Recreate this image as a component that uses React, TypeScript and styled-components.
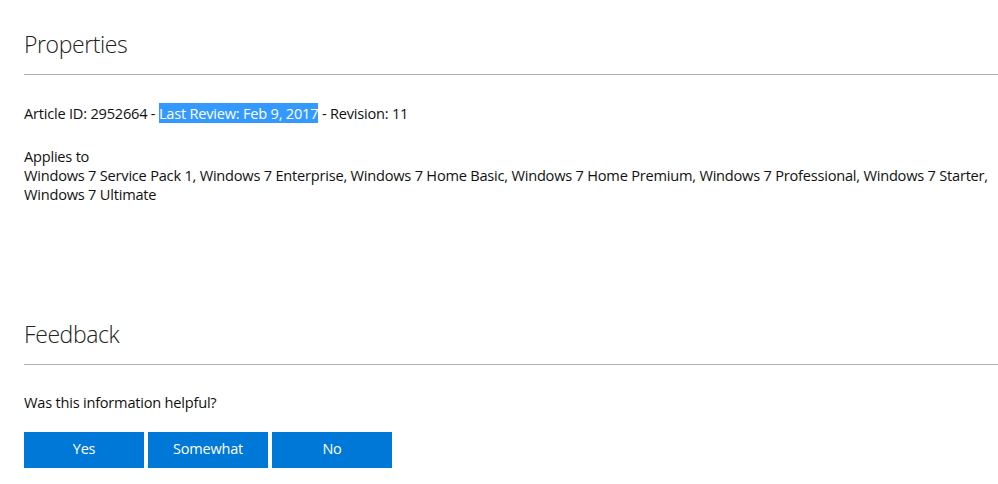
import React from "react";
import styled, { createGlobalStyle } from "styled-components";

const Global = createGlobalStyle`
  html, body { margin: 0; padding: 0; background: #fff; }
  body { font-family: "Segoe UI", "Open Sans", "Liberation Sans", sans-serif; color: #000; }
  ::selection { background: #3399ff; color: #fff; }
`;

const Page = styled.div`
  padding: 22px 0 0 24px;
  width: 974px;
`;

const Section = styled.section<{ $gap?: number }>`
  margin-bottom: ${(p) => p.$gap ?? 0}px;
`;

const Heading = styled.h2`
  margin: 0;
  font-size: 23px;
  font-weight: 300;
  line-height: 32px;
  letter-spacing: -0.4px;
  color: #222;
  padding-top: 6px;
  padding-bottom: 14px;
  border-bottom: 1px solid #b3b3b3;
`;

const Text = styled.p<{ $top: number }>`
  margin: ${(p) => p.$top}px 0 0;
  font-size: 14.6px;
  line-height: 19px;
  letter-spacing: -0.22px;
  color: #111;
`;

const Highlight = styled.span`
  background: #3399ff;
  color: #fff;
`;

const Buttons = styled.div`
  display: flex;
  gap: 4px;
  margin-top: 20px;
`;

const Button = styled.button`
  width: 120px;
  height: 36px;
  border: none;
  background: #0078d7;
  color: #fff;
  font-family: inherit;
  font-size: 14.5px;
  letter-spacing: -0.2px;
  line-height: 34px;
  padding: 0 0 2px;
  cursor: pointer;
`;

export default function App() {
  return (
    <>
      <Global />
      <Page>
        <Section $gap={108}>
          <Heading>Properties</Heading>
          <Text $top={29}>
            Article ID: 2952664 - <Highlight>Last Review: Feb 9, 2017</Highlight> - Revision: 11
          </Text>
          <Text $top={24}>
            Applies to
            <br />
            Windows 7 Service Pack 1, Windows 7 Enterprise, Windows 7 Home Basic, Windows 7 Home Premium, Windows 7 Professional, Windows 7 Starter, Windows 7 Ultimate
          </Text>
        </Section>
        <Section>
          <Heading>Feedback</Heading>
          <Text $top={28}>Was this information helpful?</Text>
          <Buttons>
            <Button>Yes</Button>
            <Button>Somewhat</Button>
            <Button>No</Button>
          </Buttons>
        </Section>
      </Page>
    </>
  );
}
